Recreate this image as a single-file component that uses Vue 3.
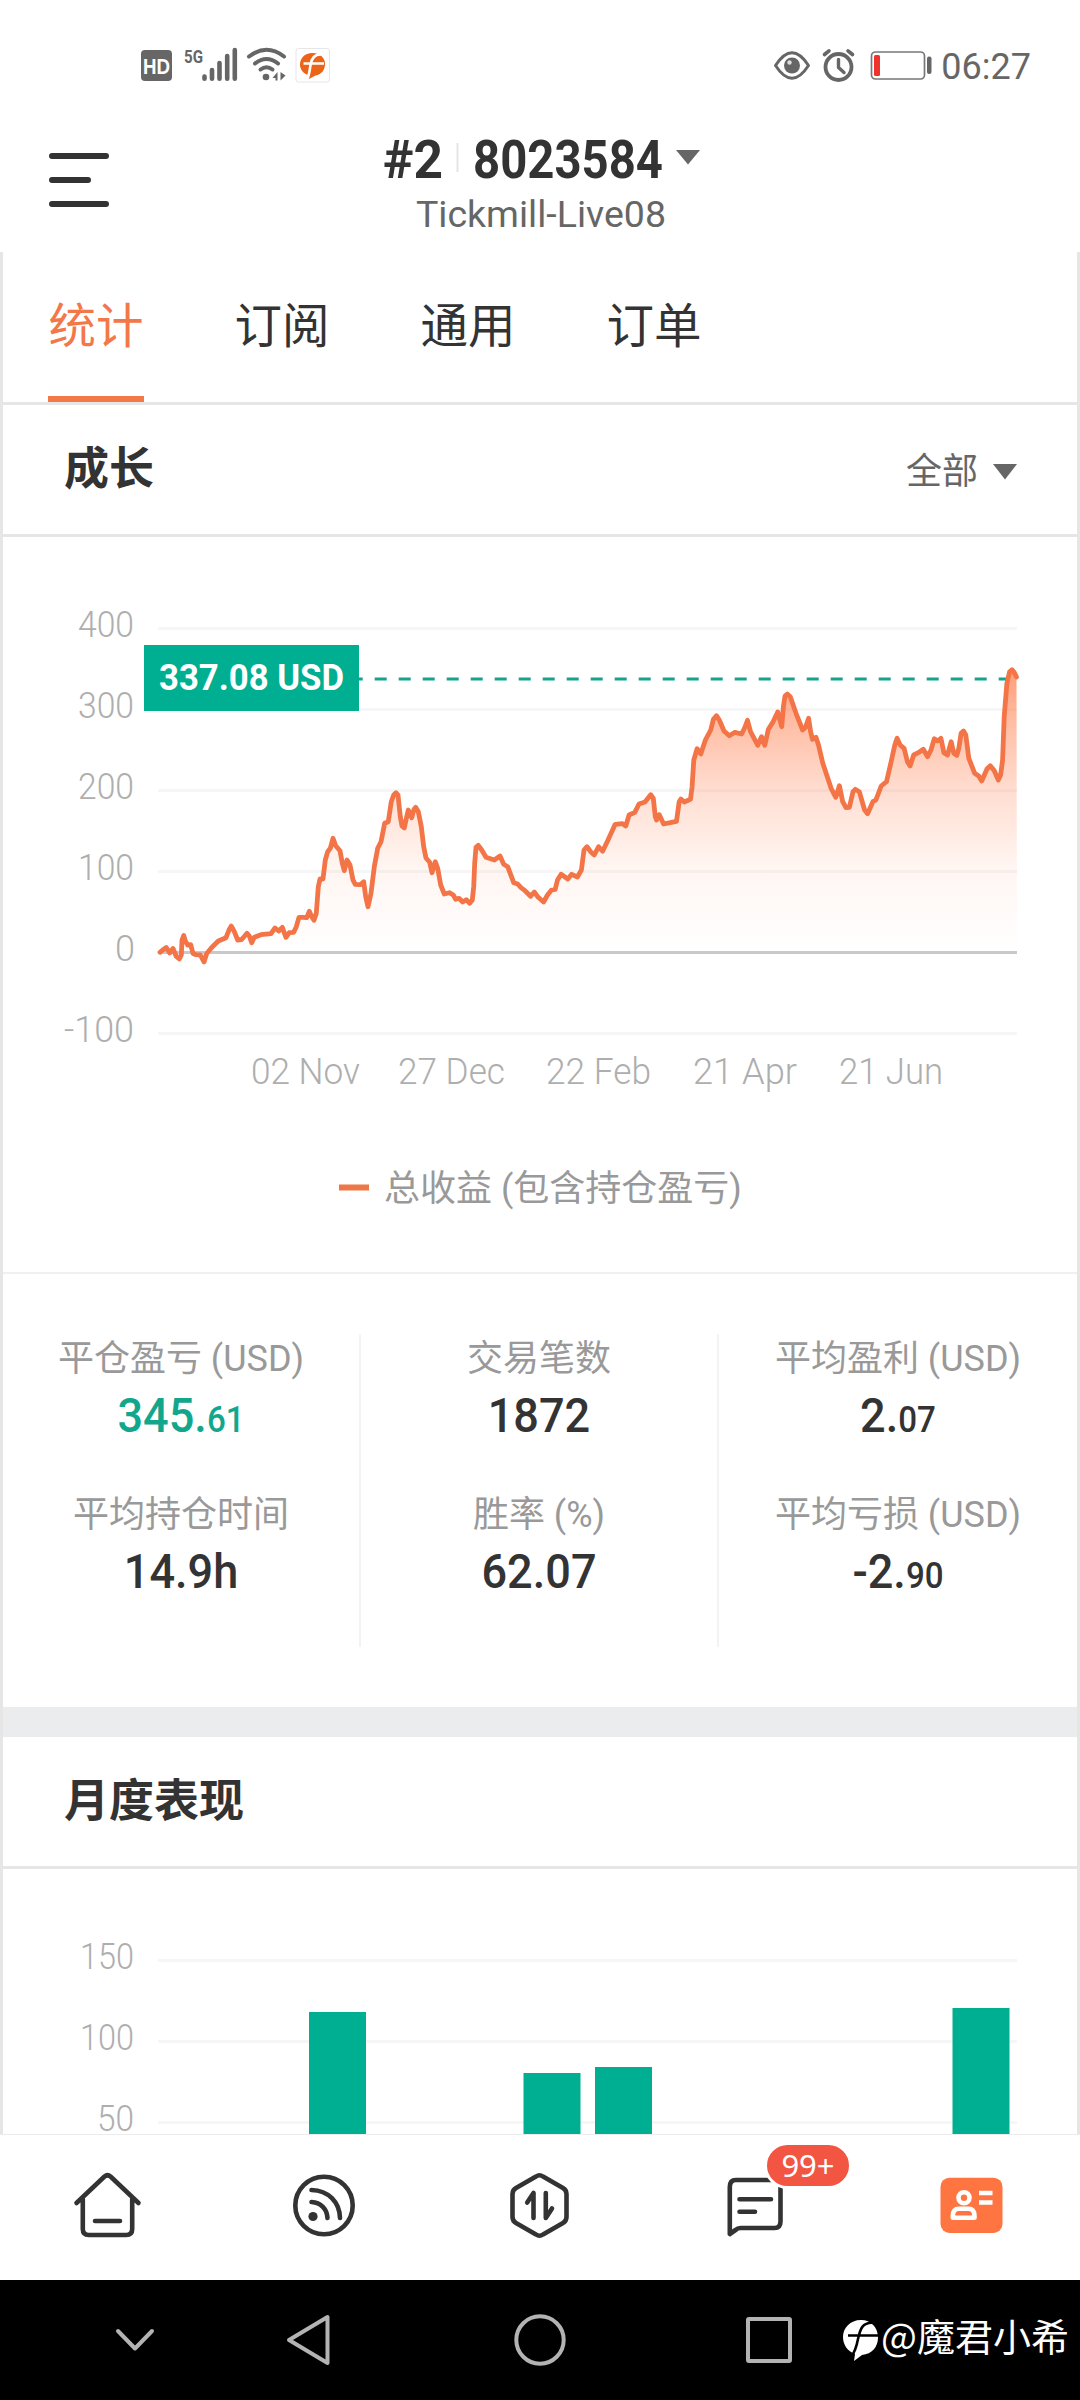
<script setup>
const tabs = ['统计', '订阅', '通用', '订单']

const growthAxis = [
  { label: '400', y: 628, x: 79, w: 54 },
  { label: '300', y: 709, x: 79, w: 54 },
  { label: '200', y: 790, x: 79, w: 54 },
  { label: '100', y: 871, x: 79, w: 54 },
  { label: '0', y: 952, x: 116, w: 18 },
  { label: '-100', y: 1033, x: 65, w: 68 },
]

const dates = [
  { label: '02 Nov', x: 252, w: 107 },
  { label: '27 Dec', x: 399, w: 105 },
  { label: '22 Feb', x: 547, w: 103 },
  { label: '21 Apr', x: 694, w: 102 },
  { label: '21 Jun', x: 840, w: 102 },
]

const line = `159,952.3 161.7,950 165.3,947.5 168.7,953 172,948.5 175.3,956.5 178.3,959 180.3,955 181,940 182.7,935.5
184.3,941 186.7,945 189.7,944.7 192,953.5 195,954.7 199.3,955 203,962 205.7,953.5 210.7,947.5 217.3,941
225,937.7 228,930 230.3,926 233.3,931.7 236.7,940 240.7,939.5 246,933.3 248.3,936 250.7,942.7 253.3,937.3
260,934.7 270,933.7 274,928 277.7,931 281.3,927.3 285,937.3 288.3,932.7 292.7,932.3 295.3,926.7 298,917.3
301.7,917.3 305.7,917.7 308.3,911.3 310.7,916.7 313,920.3 315.3,913.3 317.3,886.7 319,879 322,879 324.3,860
326.7,851.7 329.3,848.3 332,838.3 334.7,845.7 339,850.7 341.3,863.3 343.3,870.7 346,860 349,865 352,880
354.3,884.3 359.3,884.7 362.7,881.7 364.7,896.7 367,906.7 370,893.3 373.3,866.7 376.7,848.3 380,841.7
383.7,823.3 387.3,821.7 390.3,801.7 392.7,795 395,792.7 397,795 399.3,816.7 401,826 403.3,828 405.7,816.7
407.3,810 410.7,817.7 413,809.3 414.7,807.3 417.3,811.7 420.3,826.7 422.7,846.7 425,858 428.7,862.3 431,872.7
434.3,861.7 436.7,868.3 439.7,885 443.3,894 448.3,892.7 452.3,895 454.7,899.3 458,898.3 461.7,902 465.3,899.7
468.7,903.3 471.3,900 472.7,886.7 473.7,863.3 475,847.3 477.3,845.3 480.7,850 485,857.3 493.3,860 499,856
502.7,864.3 506.7,866.7 512.7,882.7 516.7,884 520,887.7 524,890.7 529.6,896.3 533.3,892 537.2,897.3 542.6,902
546.5,895 550.5,890 554.2,889.3 556.5,880 560.1,874.3 566.8,879 570.7,874.3 576.4,877 580.4,870 583,850
586,846.7 589.6,851.7 593.3,855 597.6,846.7 601.6,851.3 606.2,841.7 614.2,824.3 621.5,823.7 624.8,826
628.1,815 633.8,812.3 638,804 644,802 649.7,794.7 652.3,798.3 654.3,816.7 655.6,820 658.3,814.7 662.6,824
669.2,822.7 675.5,821.3 678.2,801.7 679.9,799 683.2,802 689.5,799.3 691.1,786.7 692.8,760 696.1,748.7
699.8,754 704.4,740 709.7,730 712.4,719.3 715.4,715.7 718.3,720 723,731 728.3,735.7 733.9,732.3 740.6,734
743.9,727.3 746.5,720.3 749.5,731.7 756.8,745.3 760.5,736.7 763.8,745.3 767.4,729.3 772.1,721.7 776.7,712
780.7,726.7 782.4,706.7 784,696 786.3,694 789.3,696.7 795,713.3 801.6,730 804.6,727.3 807.6,718.3 809.6,731.7
811.5,739.3 814.9,737.3 817.5,745 821.8,763.3 830.1,788.3 834.8,797.3 838.4,785.7 841.7,801.7 845,807.7
848.4,807.3 852,791.7 854.3,789.3 858.3,791.7 863.6,810 866.6,813.7 871.9,801.7 874.9,800 880.2,786
885.5,781.7 889.8,763.3 893.8,745 896.1,738.3 899.1,745 903.1,748.3 906.4,761.7 909.1,766 912.7,755
917.3,752.7 922.3,749.3 926.6,756.7 930,750 933.3,738.7 936.6,741 939.9,738.3 942.9,752.7 946.5,755
950.2,741.7 952.8,753.3 955.8,755.3 957.8,748.3 960.1,733.3 962.5,731 964.8,735 967.8,758.3 973.7,773.3
977.7,776 980.7,781 986,769 989.3,765.7 993.3,770.7 997.3,780 999.6,775 1001.6,760 1003.2,716.7 1005.9,683.3
1008.6,671.7 1010.9,669.7 1013.2,672.3 1015.5,677`

const area = `159,952 ${line} 1016,952`

const stats = [
  [
    { label: '平仓盈亏 (USD)', big: '345.', small: '61', green: true },
    { label: '平均持仓时间', big: '14.9h', small: '' },
  ],
  [
    { label: '交易笔数', big: '1872', small: '' },
    { label: '胜率 (%)', big: '62.07', small: '' },
  ],
  [
    { label: '平均盈利 (USD)', big: '2.', small: '07' },
    { label: '平均亏损 (USD)', big: '-2.', small: '90' },
  ],
]

const monthAxis = [
  { label: '150', y: 1960, x: 81, w: 52 },
  { label: '100', y: 2041, x: 81, w: 52 },
  { label: '50', y: 2122, x: 98, w: 35 },
]

const bars = [
  { x: 309, y: 2012 },
  { x: 523.5, y: 2073 },
  { x: 595, y: 2067 },
  { x: 952.5, y: 2008 },
]
</script>

<template>
  <div class="screen">
    <div class="status">
      <svg width="190" height="36" viewBox="141 47 190 36">
        <rect x="141" y="50" width="31" height="31" rx="4" fill="#666" />
        <text x="143" y="74" class="hd" textLength="27" lengthAdjust="spacingAndGlyphs">HD</text>
        <text x="184" y="62.500" class="fiveg" textLength="19" lengthAdjust="spacingAndGlyphs">5G</text>
        <g stroke="#666" stroke-width="4.600" stroke-linecap="round">
          <path d="M204.500 76.500V78.700M212 70V78.700M219.500 63V78.700M227.200 56V78.700M234.800 50V78.700" />
        </g>
        <g fill="none" stroke="#666" stroke-width="4" stroke-linecap="round">
          <path d="M249 56.500Q266.500 43 284 56.500" />
          <path d="M255 63.500Q266.500 54.500 278 63.500" />
          <path d="M260.500 69.500Q266.500 65 272.500 69.500" />
        </g>
        <circle cx="266" cy="77" r="3.300" fill="#666" />
        <path d="M277.500 72V80.500H275.500V78H272.500ZM280.500 72V80.500L285.500 75.500Z" fill="#666" />
        <rect x="296" y="48.500" width="33.500" height="33.500" rx="2.500" fill="#fff" stroke="#e6e6e6" />
        <path d="M312.500 53C304.500 53 300 58.500 300 64.500C300 70.500 304.500 74.500 309 75L308 79.500L315.500 75.500C322 74.500 325 69.500 325 64C325 57.500 319.500 53 312.500 53Z" fill="#eb6418" />
        <path d="M322 54.500C314 53.500 311.500 59 310.500 65C309.500 72 309 76 307 80M303.500 63.500H324" fill="none" stroke="#fff" stroke-width="2.600" />
      </svg>
      <div class="status-right">
        <svg width="160" height="36" viewBox="773 47 160 36">
          <path d="M775.500 65.500Q792 40 808.500 65.500Q792 91 775.500 65.500Z" fill="none" stroke="#666" stroke-width="3" stroke-linejoin="round" />
          <circle cx="792" cy="65.500" r="8" fill="#666" />
          <circle cx="789.500" cy="62.500" r="2.200" fill="#ddd" />
          <g fill="none" stroke="#666" stroke-linecap="round">
            <circle cx="838.500" cy="67" r="13" stroke-width="3.800" />
            <path d="M838.500 59.500V67.500L844 72.500" stroke-width="3.400" stroke-linejoin="round" />
            <path d="M824.500 54.500L829 50.800M852.500 54.500L848 50.800" stroke-width="3.600" />
          </g>
          <rect x="871.500" y="52" width="53" height="27" rx="4" fill="none" stroke="#777" stroke-width="1.700" />
          <rect x="874" y="55" width="6" height="21" rx="1.500" fill="#f0312c" />
          <rect x="927" y="56.500" width="4.500" height="17.500" rx="2" fill="#666" />
        </svg>
        <span class="clock">06:27</span>
      </div>
    </div>

    <header class="head">
      <svg class="menu" width="60" height="54" viewBox="0 0 60 54" fill="#333">
        <rect width="60" height="6" rx="3" />
        <rect y="24" width="42" height="6" rx="3" />
        <rect y="48" width="60" height="6" rx="3" />
      </svg>
      <svg width="324" height="122" viewBox="380 130 324 122">
        <text x="383" y="178" class="account" textLength="60" lengthAdjust="spacingAndGlyphs">#2</text>
        <rect x="456.500" y="143" width="2" height="29" fill="#e6e6e6" />
        <text x="473" y="178" class="account" textLength="190" lengthAdjust="spacingAndGlyphs">8023584</text>
        <path d="M676 150H700L688 164.500Z" fill="#666" />
        <text x="416" y="227" class="server" textLength="250" lengthAdjust="spacingAndGlyphs">Tickmill-Live08</text>
      </svg>
    </header>

    <main class="body">
      <nav class="tabs">
        <div v-for="(t, i) in tabs" :key="t" class="tab" :class="{ active: i === 0 }">{{ t }}</div>
      </nav>

      <div class="section-head">
        <h2>成长</h2>
        <div class="filter">
          <span>全部</span>
          <svg width="24" height="16" viewBox="0 0 24 16"><path d="M0 0H24L12 15.500Z" fill="#666" /></svg>
        </div>
      </div>

      <svg class="growth" width="1074" height="735" viewBox="3 537 1074 735">
        <defs>
          <linearGradient id="fade" gradientUnits="userSpaceOnUse" x1="0" y1="670" x2="0" y2="952">
            <stop offset="0" stop-color="#ff7541" stop-opacity=".72" />
            <stop offset=".18" stop-color="#ff7541" stop-opacity=".48" />
            <stop offset=".43" stop-color="#ff7541" stop-opacity=".24" />
            <stop offset=".7" stop-color="#ff7541" stop-opacity=".07" />
            <stop offset="1" stop-color="#ff7541" stop-opacity="0" />
          </linearGradient>
        </defs>
        <g v-for="a in growthAxis" :key="a.label">
          <rect x="158" :y="a.y - 1" width="859" height="3" :fill="a.label === '0' ? '#c8c8c8' : '#f6f6f6'" />
          <text class="axis" :x="a.x - 1" :y="a.y + 9" :textLength="a.w + 2" lengthAdjust="spacingAndGlyphs">{{ a.label }}</text>
        </g>
        <path d="M350.700 679H1008" stroke="#16a28c" stroke-width="3" stroke-dasharray="12 12" />
        <g transform="translate(1 0)">
          <polygon :points="area" fill="url(#fade)" />
          <polyline :points="line" fill="none" stroke="#f37446" stroke-width="4.800" stroke-linejoin="round" stroke-linecap="round" />
        </g>
        <rect x="144" y="645" width="215" height="66" fill="#00af92" />
        <text class="tag" x="159" y="690" textLength="185" lengthAdjust="spacingAndGlyphs">337.08 USD</text>
        <text v-for="d in dates" :key="d.label" class="axis" :x="d.x - 1" y="1083.500" :textLength="d.w + 2" lengthAdjust="spacingAndGlyphs">{{ d.label }}</text>
        <rect x="339" y="1184.500" width="30" height="6" fill="#ee7748" />
        <text class="legend" x="384" y="1200.500">总收益 (包含持仓盈亏)</text>
      </svg>

      <div class="stats">
        <div v-for="(col, i) in stats" :key="i" class="col">
          <div v-for="s in col" :key="s.label" class="stat">
            <div class="label">{{ s.label }}</div>
            <div class="value" :class="{ green: s.green }">{{ s.big }}<small>{{ s.small }}</small></div>
          </div>
        </div>
      </div>

      <div class="band"></div>

      <div class="section-head">
        <h2>月度表现</h2>
      </div>

      <svg class="months" width="1074" height="265" viewBox="3 1869 1074 265">
        <g v-for="a in monthAxis" :key="a.label">
          <rect x="158" :y="a.y - 1" width="859" height="3" fill="#f6f6f6" />
          <text class="axis" :x="a.x - 1" :y="a.y + 9" :textLength="a.w + 2" lengthAdjust="spacingAndGlyphs">{{ a.label }}</text>
        </g>
        <rect v-for="b in bars" :key="b.x" :x="b.x" :y="b.y" width="57" :height="2134 - b.y" fill="#00af92" />
      </svg>
    </main>

    <nav class="bottom">
      <div class="item">
        <svg width="70" height="70" viewBox="73 2170 70 70">
          <path d="M76.500 2203L104.500 2176.500Q107.500 2174 110.500 2176.500L138.500 2203M82.800 2199V2229Q82.800 2235 88.800 2235H126.200Q132.200 2235 132.200 2229V2199M95 2221H120" />
        </svg>
      </div>
      <div class="item">
        <svg width="70" height="70" viewBox="288.500 2170 70 70">
          <circle cx="323.500" cy="2205.500" r="28.700" />
          <path d="M311 2190C328 2190.500 339 2202 339.500 2218M311 2202C320.500 2202.500 326.500 2209 327 2218" />
          <circle cx="312.500" cy="2216.500" r="4.600" class="solid" />
        </svg>
      </div>
      <div class="item">
        <svg width="70" height="70" viewBox="505 2170 70 70">
          <path d="M536 2176.500Q539.500 2174 543 2176.500L563 2188Q566.500 2190 566.500 2194V2217Q566.500 2221 563 2223L543 2234.500Q539.500 2237 536 2234.500L516 2223Q512.500 2221 512.500 2217V2194Q512.500 2190 516 2188Z" />
          <path d="M527.200 2202.500L533.500 2193V2218M545.800 2193V2218L552 2208.500" />
        </svg>
      </div>
      <div class="item">
        <div class="chat">
          <svg width="70" height="70" viewBox="721.500 2170 70 70">
            <path d="M730.300 2234V2187Q730.300 2180 736.300 2180H775Q781 2180 781 2187V2221.500Q781 2228 775 2228H741Q738 2228 736 2230L730.300 2234Z" />
            <path d="M740 2199.300H771.500M740 2211.700H755.500" />
          </svg>
          <span class="badge">99+</span>
        </div>
      </div>
      <div class="item">
        <svg width="70" height="70" viewBox="937 2170 70 70">
          <rect x="940.500" y="2177.700" width="62" height="55.300" rx="9" fill="#ff7541" stroke="none" />
          <g stroke="#fff" stroke-linecap="butt">
            <circle cx="964" cy="2197.700" r="5.500" />
            <path d="M952.800 2217.800V2216Q952.800 2208.800 959 2208.800H968.500Q974.500 2208.800 974.500 2216V2217.800Z" />
            <path d="M979 2193H992.500M979 2202.500H992.500" />
          </g>
        </svg>
      </div>
    </nav>

    <div class="sysnav">
      <svg width="690" height="60" viewBox="110 2310 690 60" fill="none" stroke="#b3b3b3" stroke-width="4" stroke-linecap="round" stroke-linejoin="round">
        <path d="M118 2331L135 2348.500L152 2331" />
        <path d="M289 2340L327.500 2317V2363Z" />
        <circle cx="540" cy="2340" r="23.700" />
        <rect x="748" y="2319" width="42" height="42" rx="1" />
      </svg>
      <div class="author">
        <svg width="36" height="44" viewBox="843 2320 36 44">
          <path d="M861 2322C850 2322 843 2330 843 2339C843 2347 847.500 2353 855 2356L854 2363L862 2357C872 2356 878 2349 878 2339.500C878 2329.500 871 2322 861 2322Z" fill="#fff" />
          <path d="M875 2325C862 2323 860 2332 858 2341C856.500 2349 855 2354 851 2359M848 2337.500H878" fill="none" stroke="#000" stroke-width="2.600" />
        </svg>
        <span>@魔君小希</span>
      </div>
    </div>
  </div>
</template>

<style>
body {
  margin: 0;
  background: #fff;
}
</style>

<style scoped>
.screen {
  width: 1080px;
  height: 2400px;
  display: flex;
  flex-direction: column;
  overflow: hidden;
  background: #fff;
  color: #333;
  font-family: Roboto, 'Noto Sans CJK SC', sans-serif;
}
svg {
  display: block;
  flex: none;
  overflow: visible;
}
.status {
  height: 130px;
  display: flex;
  align-items: center;
  justify-content: space-between;
  padding: 0 49px 0 141px;
  box-sizing: border-box;
}
.status-right {
  display: flex;
  align-items: center;
  gap: 8px;
}
.clock {
  font-size: 36px;
  line-height: 38px;
  padding-top: 3px;
  color: #666;
}
.hd {
  font: 700 22px 'Liberation Sans', sans-serif;
  fill: #fff;
}
.fiveg {
  font: 700 19px Roboto, sans-serif;
  fill: #666;
}
.head {
  height: 122px;
  display: grid;
  grid-template-columns: 331px 1fr;
  padding-left: 49px;
}
.menu {
  margin-top: 23px;
}
.account {
  font: 700 53.500px Roboto, sans-serif;
  fill: #333;
}
.server {
  font: 400 36.500px Roboto, sans-serif;
  fill: #666;
}
.body {
  height: 1882px;
  border: solid #e6e6e6;
  border-width: 0 3px;
  box-sizing: border-box;
}
.tabs {
  height: 150px;
  display: flex;
  gap: 90px;
  padding-left: 45px;
  border-bottom: 3px solid #e6e6e6;
}
.tab {
  width: 96px;
  height: 150px;
  box-sizing: border-box;
  font-size: 47.500px;
  line-height: 141px;
  text-align: center;
  white-space: nowrap;
  font-family: 'Noto Sans CJK SC', sans-serif;
}
.tab.active {
  color: #f47748;
  border-bottom: 6px solid #f47748;
}
.section-head {
  height: 129px;
  border-bottom: 3px solid #e6e6e6;
  display: flex;
  justify-content: space-between;
  align-items: center;
  padding: 0 60px 0 61px;
}
h2 {
  margin: 0;
  padding-bottom: 7px;
  font: 700 45px/60px 'Noto Sans CJK SC', sans-serif;
}
.filter {
  display: flex;
  align-items: center;
  gap: 15px;
  padding-top: 4px;
  font-size: 36px;
  line-height: 48px;
  color: #666;
}
.axis {
  font: 300 36.500px Roboto, sans-serif;
  fill: #aeaeae;
}
.tag {
  font: 700 36px Roboto, sans-serif;
  fill: #fff;
}
.legend {
  font: 400 36px Roboto, 'Noto Sans CJK SC', sans-serif;
  fill: #999;
}
.stats {
  height: 435px;
  box-sizing: border-box;
  border-top: 2px solid #f0f0f0;
  padding-top: 60px;
  display: grid;
  grid-template-columns: 358px 358px 358px;
}
.col {
  height: 313px;
  box-sizing: border-box;
  border-right: 2px solid #f3f3f3;
  padding-top: 1px;
  text-align: center;
}
.col:last-child {
  border-right: 0;
}
.stat {
  height: 156px;
}
.label {
  height: 50px;
  font-size: 36px;
  line-height: 48px;
  color: #999;
  white-space: nowrap;
}
.value {
  height: 60px;
  font-size: 49px;
  line-height: 62px;
  font-weight: 500;
  transform: scaleX(0.92);
}
.value small {
  font-size: 36px;
}
.green {
  color: #12a78d;
}
.band {
  height: 30px;
  background: #ebeced;
}
.bottom {
  height: 146px;
  box-sizing: border-box;
  border-top: 1px solid #ececec;
  padding-bottom: 5px;
  background: #fff;
  display: grid;
  grid-template-columns: repeat(5, 216px);
  align-items: center;
  justify-items: center;
}
.item svg {
  fill: none;
  stroke: #333;
  stroke-width: 4.6px;
  stroke-linecap: round;
  stroke-linejoin: round;
}
.item .solid {
  fill: #333;
  stroke: none;
}
.chat {
  position: relative;
}
.badge {
  position: absolute;
  left: 43px;
  top: -28px;
  width: 82px;
  height: 41px;
  border: 3px solid #fff;
  border-radius: 24px;
  background: #f25643;
  color: #fff;
  font: 400 31px/40px 'Noto Sans', sans-serif;
  text-align: center;
}
.sysnav {
  height: 120px;
  background: #000;
  display: flex;
  align-items: center;
  padding-left: 110px;
}
.author {
  display: flex;
  align-items: center;
  margin-left: 43px;
  color: #fff;
  font: 400 38px/50px 'Noto Sans CJK SC', sans-serif;
  white-space: nowrap;
  gap: 2px;
}
.author span {
  margin-top: -10px;
}
</style>
